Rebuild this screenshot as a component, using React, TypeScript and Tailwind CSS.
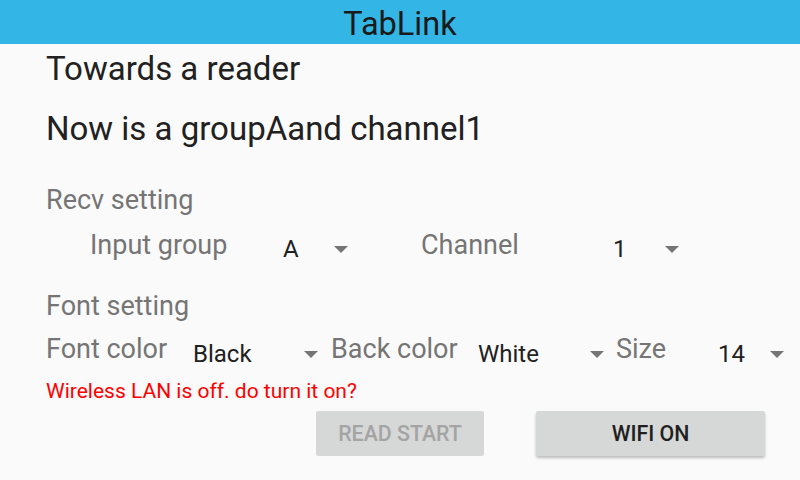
import React from "react"

function Arrow() {
  return (
    <svg width="14" height="7" viewBox="0 0 14 7" className="shrink-0">
      <path d="M0 0 L14 0 L7 7 Z" fill="#757575" />
    </svg>
  )
}

function Spinner({ value, className }: { value: string; className: string }) {
  return (
    <div className={`flex h-[32px] shrink-0 items-center justify-between text-[24px] leading-[32px] text-[#212121] ${className}`}>
      <span>{value}</span>
      <Arrow />
    </div>
  )
}

export default function App() {
  return (
    <div
      className="h-[480px] w-[800px] overflow-hidden bg-[#fafafa]"
      style={{ fontFamily: "Roboto, 'Noto Sans', sans-serif" }}
    >
      {/* action bar */}
      <div className="h-[44px] overflow-hidden bg-[#33b5e5] text-center">
        <div className="pt-[2px] text-[32.5px] leading-[44px] text-[#1a1a1a]">TabLink</div>
      </div>

      <div className="px-[46px]">
        <div className="mt-[5px] text-[33px] leading-[40px] text-[#212121]">Towards a reader</div>
        <div className="mt-[20px] text-[33px] leading-[40px] text-[#212121]">Now is a groupAand channel1</div>

        {/* recv setting */}
        <div className="mt-[35px] text-[27px] leading-[32px] text-[#757575]">Recv setting</div>
        <div className="mt-[13px] flex h-[36px] items-start">
          <div className="ml-[44px] w-[193px] shrink-0 text-[27px] leading-[32px] text-[#757575]">Input group</div>
          <Spinner value="A" className="mt-[4px] w-[65px]" />
          <div className="ml-[73px] w-[192px] shrink-0 text-[27px] leading-[32px] text-[#757575]">Channel</div>
          <Spinner value="1" className="mt-[4px] w-[66px]" />
        </div>

        {/* font setting */}
        <div className="mt-[25px] text-[27px] leading-[32px] text-[#757575]">Font setting</div>
        <div className="mt-[11px] flex h-[37px] items-start">
          <div className="w-[147px] shrink-0 text-[27px] leading-[32px] text-[#757575]">Font color</div>
          <Spinner value="Black" className="mt-[5px] w-[125px]" />
          <div className="ml-[13px] w-[147px] shrink-0 text-[27px] leading-[32px] text-[#757575]">Back color</div>
          <Spinner value="White" className="mt-[5px] w-[126px]" />
          <div className="ml-[12px] w-[102px] shrink-0 text-[27px] leading-[32px] text-[#757575]">Size</div>
          <Spinner value="14" className="mt-[5px] w-[66px]" />
        </div>

        <div className="mt-[7px] text-[21px] leading-[28px] text-[#ff0000]">Wireless LAN is off. do turn it on?</div>

        {/* buttons */}
        <div className="mt-[6px] flex">
          <button className="ml-[270px] h-[45px] w-[168px] shrink-0 rounded-[2px] bg-[#d6d7d7] text-[21.33px] font-medium text-[#a4a4a4]">
            READ START
          </button>
          <button className="ml-[52px] h-[45px] w-[229px] shrink-0 rounded-[2px] bg-[#d6d7d7] text-[21.33px] font-medium text-[#1f1f1f] shadow-[0_2px_3px_rgba(0,0,0,0.25)]">
            WIFI ON
          </button>
        </div>
      </div>
    </div>
  )
}
